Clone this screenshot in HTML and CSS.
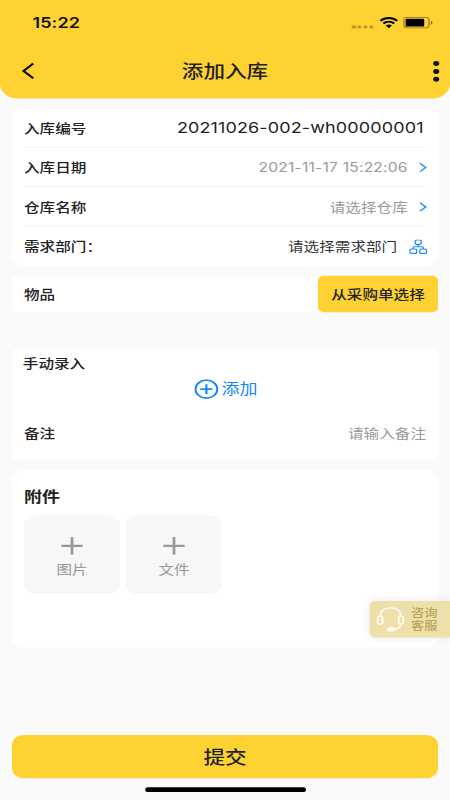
FILE: index.html
```html
<!DOCTYPE html>
<html lang="zh-CN">
<head>
<meta charset="utf-8">
<title>添加入库</title>
<link rel="stylesheet" href="styles.css">
</head>
<body>
<div class="screen">
  <header class="header">
    <div class="status">
      <span class="time">15:22</span>
      <div class="status-icons">
        <span class="signal"><i></i><i></i><i></i><i></i></span>
        <svg class="wifi" width="16" height="12" viewBox="0 0 16 12"><path d="M1 4.2a10 10 0 0 1 14 0M3.5 6.8a6.4 6.4 0 0 1 9 0" fill="none" stroke="#000" stroke-width="2"/><path d="M5.4 9a3.8 3.8 0 0 1 5.2 0L8 11.6z"/></svg>
        <svg class="battery" width="25" height="12" viewBox="0 0 25 12"><rect x=".5" y=".5" width="21" height="11" rx="3" fill="none" stroke="#000" stroke-opacity=".45"/><rect x="2" y="2" width="15.5" height="8" rx="1.2"/><path d="M23 4v4q1.4-.6 1.4-2T23 4z" opacity=".45"/></svg>
      </div>
    </div>
    <div class="navbar">
      <svg class="back" width="11" height="18" viewBox="0 0 11 18"><path d="M9.7 1.5 1.6 9l8.1 7.5" fill="none" stroke="#111" stroke-width="2"/></svg>
      <h1>添加入库</h1>
      <span class="more"><i></i><i></i><i></i></span>
    </div>
  </header>

  <section class="card fields">
    <div class="row"><span class="label">入库编号</span><span class="number">20211026-002-wh00000001</span></div>
    <div class="row"><span class="label">入库日期</span><span class="value date">2021-11-17 15:22:06</span><svg class="chevron" width="7" height="10" viewBox="0 0 7 10"><path d="M1 .8 5.8 5 1 9.2" fill="none" stroke="#238cf5" stroke-width="1.3"/></svg></div>
    <div class="row"><span class="label">仓库名称</span><span class="value">请选择仓库</span><svg class="chevron" width="7" height="10" viewBox="0 0 7 10"><path d="M1 .8 5.8 5 1 9.2" fill="none" stroke="#238cf5" stroke-width="1.3"/></svg></div>
    <div class="row"><span class="label">需求部门：</span><span class="value dark">请选择需求部门</span><svg class="org" width="15" height="15" viewBox="0 0 15 15"><g fill="none" stroke="#238cf5" stroke-width="1.1"><rect x="5" y=".6" width="5" height="4.4" rx="1"/><rect x=".6" y="9.8" width="5.6" height="4.4" rx="1"/><rect x="8.8" y="9.8" width="5.6" height="4.4" rx="1"/><path d="M7.5 5v2.5M3.2 9.8V8.5q0-1 1-1h6.6q1 0 1 1v1.3"/></g></svg></div>
  </section>

  <section class="card goods">
    <span class="label">物品</span>
    <button class="pick">从采购单选择</button>
  </section>

  <section class="card manual">
    <div class="label">手动录入</div>
    <div class="add"><svg width="20" height="20" viewBox="0 0 20 20"><path d="M10 5v10M5 10h10" stroke="#1389f5" stroke-width="1.8"/><circle cx="10" cy="10" r="9.1" fill="none" stroke="#1389f5" stroke-width="1.7"/></svg><span>添加</span></div>
    <div class="remark"><span class="label">备注</span><span class="value">请输入备注</span></div>
  </section>

  <section class="card files">
    <h2>附件</h2>
    <div class="tiles">
      <div class="tile"><svg width="18" height="18" viewBox="0 0 18 18"><path d="M9 0v18M0 9h18" stroke="#999" stroke-width="2.3"/></svg><span>图片</span></div>
      <div class="tile"><svg width="18" height="18" viewBox="0 0 18 18"><path d="M9 0v18M0 9h18" stroke="#999" stroke-width="2.3"/></svg><span>文件</span></div>
    </div>
  </section>

  <button class="submit">提交</button>
  <div class="home-bar"></div>

  <div class="service">
    <svg width="23" height="26" viewBox="0 0 23 26"><g fill="none" stroke="#fffdf5" stroke-width="1.5"><path d="M3 9.5C3 4 6.5 1 11.5 1S20 4 20 9.5"/><rect x=".8" y="9.5" width="4" height="8" rx="1.8"/><rect x="18.2" y="9.5" width="4" height="8" rx="1.8"/><path d="M20 17.5q-.8 4.7-5.5 5.2"/></g><rect x="8.5" y="20.7" width="7" height="4.3" rx="2" fill="#fffdf5"/></svg>
    <span>咨询<br>客服</span>
  </div>
</div>
</body>
</html>
```

FILE: styles.css
```css
* { box-sizing: border-box; }
html { height: 800px; overflow: hidden; background: #fafafa; }
body { margin: 0; height: 800px; overflow: hidden; }
h1, h2 { margin: 0; }
button { border: 0; padding: 0; font-family: inherit; background: #ffd233; color: #222; }
svg { display: block; flex: none; }

/* A 375x812 phone canvas, stretched to fill the 450x800 viewport. */
.screen {
  position: relative;
  width: 375px;
  height: 812px;
  display: flex;
  flex-direction: column;
  transform: scale(1.2, 0.98522);
  transform-origin: 0 0;
  background: #fafafa;
  color: #222;
  font-family: Inter, "Noto Sans CJK SC", sans-serif;
  font-size: 13px;
  line-height: 20px;
}

.header { height: 100px; background: #ffd233; border-radius: 0 0 15px 15px; flex: none; }
.status { height: 46px; padding: 0 14px 0 27px; display: flex; justify-content: space-between; align-items: center; }
.time { font-size: 15px; font-weight: 600; letter-spacing: .1px; color: #111; }
.status-icons { display: flex; align-items: center; }
.signal { display: flex; gap: 1.6px; margin: 8px 4.5px 0 0; }
.signal i { width: 3.2px; height: 3px; border-radius: 1px; background: #000; opacity: .27; }
.battery { margin-left: 4.5px; }
.navbar { height: 52px; padding: 0 9px 0 18px; display: grid; grid-template-columns: 11px 1fr 20px; align-items: center; }
.navbar h1 { font-size: 18px; font-weight: 500; text-align: center; line-height: 26px; padding-top: 2px; }
.more { display: flex; flex-direction: column; gap: 3px; justify-self: end; }
.more i { width: 5px; height: 5px; border-radius: 50%; background: #111; }

.card { background: #fff; margin: 0 10px; flex: none; border-radius: 5px; }
.label { font-weight: 500; }
.value { color: #999; margin-left: auto; }
.value.dark { color: #333; }

.fields { margin-top: 10px; height: 160px; padding: 0 10px; border-radius: 10px; }
.row { height: 40px; display: flex; align-items: center; border-bottom: 1px solid #f2f2f2; }
.row:last-child { border-bottom: 0; }
.number { margin: 0 2px 0 auto; font-size: 15px; letter-spacing: .1px; }
.date { font-size: 13px; letter-spacing: .18px; }
.chevron { margin: 0 -.8px 0 9px; }
.org { margin: 0 -.5px 0 9.5px; }

.goods { margin-top: 10px; height: 37px; padding-left: 10px; display: flex; align-items: center; justify-content: space-between; }
.pick { width: 100px; height: 37px; border-radius: 5px; font-size: 13px; font-weight: 500; padding-bottom: 2px; }
.goods .label { padding-bottom: 1px; }

.manual { margin-top: 37px; height: 113px; padding: 5px 10px 0 9px; }
.add { height: 20px; margin: 6px 0 0 3px; display: flex; justify-content: center; align-items: center; gap: 2px; color: #1389f5; font-size: 15px; }
.remark { margin: 25px 0 0 1px; display: flex; }

.files { margin-top: 10px; height: 180px; padding: 17px 10px 0; border-radius: 10px; }
.files h2 { font-size: 15px; font-weight: 600; line-height: 22px; }
.tiles { display: flex; gap: 5px; margin-top: 7px; }
.tile { width: 80px; height: 80px; border-radius: 10px; background: #f7f7f7; color: #999; display: flex; flex-direction: column; align-items: center; padding-top: 22px; gap: 5px; }

.submit { margin: 89px 10px 0; height: 44px; flex: none; border-radius: 10px; font-size: 18px; font-weight: 500; padding-bottom: 2px; }
.home-bar { width: 134px; height: 5px; margin: 9px 0 0 121px; border-radius: 3px; background: #000; flex: none; }

.service { position: absolute; left: 308px; top: 610px; width: 67px; height: 37px; padding-left: 6px; display: flex; align-items: center; gap: 5.5px; border-radius: 5px 0 0 5px; background: #eee0aa; box-shadow: 0 0 8px rgba(0, 0, 0, .08); color: #b9a35b; font-size: 11px; font-weight: 500; line-height: 13px; }
```
